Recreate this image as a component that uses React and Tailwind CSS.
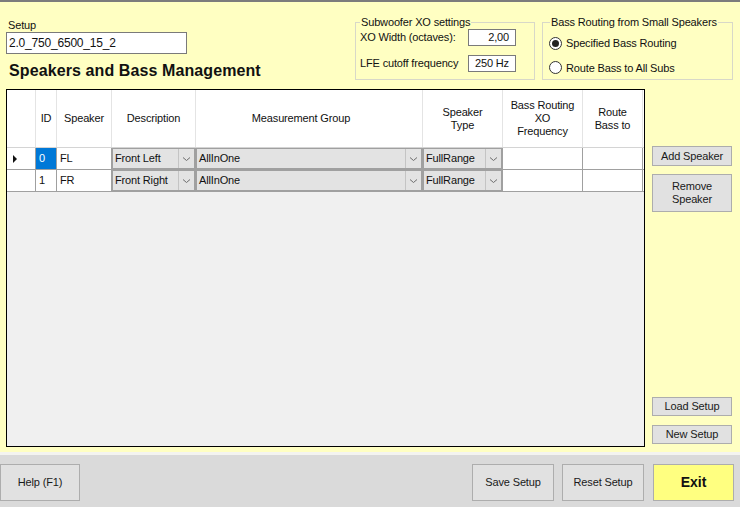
const font = { fontFamily: '"Liberation Sans", Arial, sans-serif' }

function Chevron() {
  return (
    <svg width="9" height="6" viewBox="0 0 9 6" className="text-[#6d6d6d]">
      <path d="M1 1.5 L4.5 4.5 L8 1.5" fill="none" stroke="currentColor" strokeWidth="1" />
    </svg>
  )
}

function Combo({ value }) {
  return (
    <div className="flex h-full border border-[#a0a0a0] bg-[#e3e3e3]">
      <span className="flex-1 truncate pl-[2px] leading-[19px]">{value}</span>
      <span className="flex w-[16px] items-center justify-center border-l border-[#c4c4c4]">
        <Chevron />
      </span>
    </div>
  )
}

function WinButton({ children, className = '' }) {
  return (
    <button
      type="button"
      className={`border border-[#adadad] bg-[#e1e1e1] text-[11px] leading-[13px] tracking-[-0.15px] text-[#1a1a1a] ${className}`}
    >
      {children}
    </button>
  )
}

function Radio({ checked, label }) {
  return (
    <div className="flex items-center gap-[4px]">
      <span className="flex h-[13px] w-[13px] items-center justify-center rounded-full border border-[#333] bg-white">
        {checked && <span className="h-[7px] w-[7px] rounded-full bg-[#222]" />}
      </span>
      <span>{label}</span>
    </div>
  )
}

const rows = [
  { id: '0', speaker: 'FL', desc: 'Front Left', group: 'AllInOne', type: 'FullRange', current: true },
  { id: '1', speaker: 'FR', desc: 'Front Right', group: 'AllInOne', type: 'FullRange' },
]

const cols = 'grid-cols-[29px_21px_55px_84px_227px_80px_80px_60px]'

export default function App() {
  return (
    <div
      className="flex h-[507px] w-[740px] flex-col overflow-hidden text-[11px] tracking-[-0.15px] text-[#111]"
      style={font}
    >
      <div className="flex flex-1 flex-col border-t-2 border-[#7c7c7c] bg-[#ffffc2]">
        {/* top area */}
        <div className="flex h-[87px]">
          <div className="w-[344px] pl-[6px]">
            <div className="mt-[17px] pl-[2px] leading-[13px]">Setup</div>
            <div className="h-[22px] w-[181px] border border-[#7a7a7a] bg-white pl-[2px] text-[12px] leading-[20px] tracking-[-0.2px]">
              2.0_750_6500_15_2
            </div>
            <div className="mt-[7px] pl-[3px] text-[16px] font-bold leading-[20px] tracking-[0.1px]">
              Speakers and Bass Management
            </div>
          </div>
          <fieldset className="mt-[14px] ml-[11px] h-[64px] w-[180px] border border-[#d8d8c8] px-[4px]">
            <legend className="px-[1px] leading-[13px]">Subwoofer XO settings</legend>
            <div className="flex items-center">
              <span className="w-[108px]">XO Width (octaves):</span>
              <span className="h-[17px] w-[48px] border border-[#7a7a7a] bg-white pr-[6px] text-right leading-[15px]">2,00</span>
            </div>
            <div className="mt-[9px] flex items-center">
              <span className="w-[108px]">LFE cutoff frequency</span>
              <span className="h-[17px] w-[48px] border border-[#7a7a7a] bg-white text-center leading-[15px]">250 Hz</span>
            </div>
          </fieldset>
          <fieldset className="mt-[14px] ml-[7px] h-[64px] w-[191px] border border-[#d8d8c8] px-[6px]">
            <legend className="ml-[1px] px-[1px] leading-[13px]">Bass Routing from Small Speakers</legend>
            <div className="mt-[6px]">
              <Radio checked label="Specified Bass Routing" />
            </div>
            <div className="mt-[8px]">
              <Radio label="Route Bass to All Subs" />
            </div>
          </fieldset>
        </div>

        {/* grid + side buttons */}
        <div className="flex h-[358px]">
          <div className="ml-[6px] flex w-[639px] flex-col border border-black bg-[#f0f0f0]">
            <div className={`grid ${cols} h-[58px] border-b border-[#d4d4d4] bg-white text-center`}>
              <div className="border-r border-[#e4e4e4]" />
              <div className="flex items-center justify-center border-r border-[#e4e4e4]">ID</div>
              <div className="flex items-center justify-center border-r border-[#e4e4e4]">Speaker</div>
              <div className="flex items-center justify-center border-r border-[#e4e4e4]">Description</div>
              <div className="flex items-center justify-center border-r border-[#e4e4e4] pr-[16px]">Measurement Group</div>
              <div className="flex items-center justify-center border-r border-[#e4e4e4] leading-[13px]">
                Speaker
                <br />
                Type
              </div>
              <div className="flex items-center justify-center border-r border-[#e4e4e4] leading-[13px]">
                Bass Routing
                <br />
                XO
                <br />
                Frequency
              </div>
              <div className="flex items-center justify-center border-r border-[#e4e4e4] leading-[13px]">
                Route
                <br />
                Bass to
              </div>
            </div>
            {rows.map((r) => (
              <div key={r.id} className={`grid ${cols} h-[22px] border-b border-[#a0a0a0] bg-white`}>
                <div className="flex items-center border-r border-[#a0a0a0] pl-[6px]">
                  {r.current && (
                    <svg width="5" height="8" viewBox="0 0 5 8">
                      <path d="M0 0 L4 4 L0 8 Z" fill="#111" />
                    </svg>
                  )}
                </div>
                <div
                  className={`border-r border-[#a0a0a0] pl-[3px] leading-[21px] ${
                    r.current ? 'bg-[#0078d7] text-white' : ''
                  }`}
                >
                  {r.id}
                </div>
                <div className="border-r border-[#a0a0a0] pl-[3px] leading-[21px]">{r.speaker}</div>
                <div className="border-r border-[#a0a0a0]">
                  <Combo value={r.desc} />
                </div>
                <div className="border-r border-[#a0a0a0]">
                  <Combo value={r.group} />
                </div>
                <div className="border-r border-[#a0a0a0]">
                  <Combo value={r.type} />
                </div>
                <div className="border-r border-[#a0a0a0]" />
                <div className="border-r border-[#a0a0a0]" />
              </div>
            ))}
          </div>
          <div className="ml-[7px] flex w-[80px] flex-col pb-[3px]">
            <WinButton className="mt-[57px] h-[20px]">Add Speaker</WinButton>
            <WinButton className="mt-[8px] h-[38px]">
              Remove
              <br />
              Speaker
            </WinButton>
            <div className="flex-1" />
            <WinButton className="h-[19px]">Load Setup</WinButton>
            <WinButton className="mt-[9px] h-[19px]">New Setup</WinButton>
          </div>
        </div>
        <div className="h-[4px]" />
      </div>

      {/* bottom bar */}
      <div className="h-[3px] bg-[#f4f4f0]" />
      <div className="flex h-[52px] items-start bg-[#dadada] pt-[9px]">
        <WinButton className="h-[37px] w-[80px]">Help (F1)</WinButton>
        <div className="flex-1" />
        <WinButton className="h-[37px] w-[82px]">Save Setup</WinButton>
        <WinButton className="ml-[8px] h-[37px] w-[82px]">Reset Setup</WinButton>
        <button
          type="button"
          className="ml-[9px] mr-[6px] h-[37px] w-[81px] border border-[#adadad] bg-[#ffff80] text-[14px] font-bold tracking-normal text-[#111]"
        >
          Exit
        </button>
      </div>
    </div>
  )
}
